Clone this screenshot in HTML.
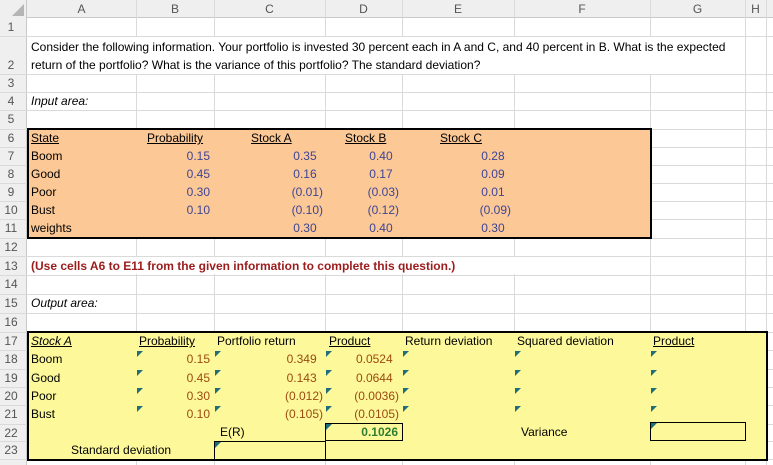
<!DOCTYPE html>
<html><head><meta charset="utf-8"><style>
*{margin:0;padding:0;box-sizing:border-box}
body{width:773px;height:465px;overflow:hidden;background:#fff;font-family:"Liberation Sans",sans-serif;font-size:12px;color:#000;position:relative}
.a{position:absolute}
.v{position:absolute;top:0;width:1px;height:465px;background:#dadada}
.h{position:absolute;left:0;width:773px;height:1px;background:#dadada}
.t{position:absolute;height:18px;line-height:18px;white-space:nowrap}
.r{text-align:right}
.u{text-decoration:underline}
.bl{color:#3d4596}
.br{color:#9c4a10}
.rn{position:absolute;left:0;width:22px;text-align:center;color:#555;font-size:12px;line-height:18px}
.tri{position:absolute;width:0;height:0;border-top:6px solid #1f6e7a;border-right:6px solid transparent}
</style></head><body>
<div class="a" style="left:0;top:0;width:773px;height:18px;background:#efefef;border-bottom:1px solid #c8c8c8"></div>
<div class="a" style="left:0;top:0;width:27px;height:465px;background:#efefef;border-right:1px solid #c8c8c8"></div>
<div class="a" style="left:12px;top:4px;width:0;height:0;border-left:12px solid transparent;border-bottom:12px solid #b5b5b5"></div>
<div class="v" style="left:136px"></div><div class="v" style="left:214px"></div><div class="v" style="left:325px"></div><div class="v" style="left:402px"></div><div class="v" style="left:514px"></div><div class="v" style="left:650px"></div><div class="v" style="left:745px"></div><div class="v" style="left:766px"></div>
<div class="h" style="top:36px"></div><div class="h" style="top:74px"></div><div class="h" style="top:92px"></div><div class="h" style="top:110px"></div><div class="h" style="top:129px"></div><div class="h" style="top:147px"></div><div class="h" style="top:165px"></div><div class="h" style="top:183px"></div><div class="h" style="top:201px"></div><div class="h" style="top:219px"></div><div class="h" style="top:238px"></div><div class="h" style="top:256px"></div><div class="h" style="top:275px"></div><div class="h" style="top:294px"></div><div class="h" style="top:313px"></div><div class="h" style="top:332px"></div><div class="h" style="top:350px"></div><div class="h" style="top:369px"></div><div class="h" style="top:387px"></div><div class="h" style="top:405px"></div><div class="h" style="top:424px"></div><div class="h" style="top:441px"></div><div class="h" style="top:459px"></div>
<div class="a" style="left:28px;top:37px;width:717px;height:37px;background:#fff"></div>
<div class="a" style="left:28px;top:257px;width:500px;height:17px;background:#fff"></div>
<div class="t" style="left:27px;width:109px;text-align:center;color:#555;top:0">A</div>
<div class="t" style="left:136px;width:78px;text-align:center;color:#555;top:0">B</div>
<div class="t" style="left:214px;width:111px;text-align:center;color:#555;top:0">C</div>
<div class="t" style="left:325px;width:77px;text-align:center;color:#555;top:0">D</div>
<div class="t" style="left:402px;width:112px;text-align:center;color:#555;top:0">E</div>
<div class="t" style="left:514px;width:136px;text-align:center;color:#555;top:0">F</div>
<div class="t" style="left:650px;width:95px;text-align:center;color:#555;top:0">G</div>
<div class="t" style="left:745px;width:21px;text-align:center;color:#555;top:0">H</div>
<div class="rn" style="top:18px">1</div><div class="rn" style="top:56px">2</div><div class="rn" style="top:74px">3</div><div class="rn" style="top:92px">4</div><div class="rn" style="top:110px">5</div><div class="rn" style="top:129px">6</div><div class="rn" style="top:147px">7</div><div class="rn" style="top:165px">8</div><div class="rn" style="top:183px">9</div><div class="rn" style="top:201px">10</div><div class="rn" style="top:219px">11</div><div class="rn" style="top:238px">12</div><div class="rn" style="top:257px">13</div><div class="rn" style="top:275px">14</div><div class="rn" style="top:294px">15</div><div class="rn" style="top:313px">16</div><div class="rn" style="top:332px">17</div><div class="rn" style="top:350px">18</div><div class="rn" style="top:369px">19</div><div class="rn" style="top:387px">20</div><div class="rn" style="top:405px">21</div><div class="rn" style="top:424px">22</div><div class="rn" style="top:441px">23</div>
<div class="t" style="left:31px;top:38px">Consider the following information. Your portfolio is invested 30 percent each in A and C, and 40 percent in B. What is the expected</div>
<div class="t" style="left:31px;top:56px">return of the portfolio? What is the variance of this portfolio? The standard deviation?</div>
<div class="t" style="left:31px;top:92px;font-style:italic">Input area:</div>
<div class="a" style="left:27px;top:128px;width:625px;height:111px;background:#fcc896;border:2px solid #000"></div>
<div class="t u" style="left:31px;top:129px">State</div>
<div class="t u" style="left:147px;top:129px">Probability</div>
<div class="t u" style="left:251px;top:129px">Stock A</div>
<div class="t u" style="left:345px;top:129px">Stock B</div>
<div class="t u" style="left:440px;top:129px">Stock C</div>
<div class="t" style="left:31px;top:147px">Boom</div><div class="t" style="left:31px;top:165px">Good</div><div class="t" style="left:31px;top:183px">Poor</div><div class="t" style="left:31px;top:201px">Bust</div><div class="t" style="left:31px;top:219px">weights</div>
<div class="t r bl" style="left:150px;width:60px;top:147px">0.15</div><div class="t r bl" style="left:150px;width:60px;top:165px">0.45</div><div class="t r bl" style="left:150px;width:60px;top:183px">0.30</div><div class="t r bl" style="left:150px;width:60px;top:201px">0.10</div>
<div class="t r bl" style="left:250px;width:70px;top:147px">0.35&nbsp;</div><div class="t r bl" style="left:250px;width:70px;top:165px">0.16&nbsp;</div><div class="t r bl" style="left:250px;width:73px;top:183px">(0.01)</div><div class="t r bl" style="left:250px;width:73px;top:201px">(0.10)</div><div class="t r bl" style="left:250px;width:70px;top:219px">0.30&nbsp;</div>
<div class="t r bl" style="left:330px;width:66px;top:147px">0.40&nbsp;</div><div class="t r bl" style="left:330px;width:66px;top:165px">0.17&nbsp;</div><div class="t r bl" style="left:330px;width:69px;top:183px">(0.03)</div><div class="t r bl" style="left:330px;width:69px;top:201px">(0.12)</div><div class="t r bl" style="left:330px;width:66px;top:219px">0.40&nbsp;</div>
<div class="t r bl" style="left:440px;width:68px;top:147px">0.28&nbsp;</div><div class="t r bl" style="left:440px;width:68px;top:165px">0.09&nbsp;</div><div class="t r bl" style="left:440px;width:68px;top:183px">0.01&nbsp;</div><div class="t r bl" style="left:440px;width:71px;top:201px">(0.09)</div><div class="t r bl" style="left:440px;width:68px;top:219px">0.30&nbsp;</div>
<div class="t" style="left:31px;top:257px;font-weight:bold;color:#9b1c1c">(Use cells A6 to E11 from the given information to complete this question.)</div>
<div class="t" style="left:31px;top:294px;font-style:italic">Output area:</div>
<div class="a" style="left:27px;top:331px;width:741px;height:130px;background:#fdf99a;border:2px solid #000"></div>
<div class="t u" style="left:31px;top:332px;font-style:italic">Stock A</div>
<div class="t u" style="left:139px;top:332px">Probability</div>
<div class="t" style="left:217px;top:332px">Portfolio return</div>
<div class="t u" style="left:329px;top:332px">Product</div>
<div class="t" style="left:405px;top:332px">Return deviation</div>
<div class="t" style="left:517px;top:332px">Squared deviation</div>
<div class="t u" style="left:653px;top:332px">Product</div>
<div class="t" style="left:31px;top:350px">Boom</div><div class="t" style="left:31px;top:369px">Good</div><div class="t" style="left:31px;top:387px">Poor</div><div class="t" style="left:31px;top:405px">Bust</div>
<div class="t r br" style="left:150px;width:60px;top:350px">0.15</div><div class="t r br" style="left:150px;width:60px;top:369px">0.45</div><div class="t r br" style="left:150px;width:60px;top:387px">0.30</div><div class="t r br" style="left:150px;width:60px;top:405px">0.10</div>
<div class="t r br" style="left:250px;width:70px;top:350px">0.349&nbsp;</div><div class="t r br" style="left:250px;width:70px;top:369px">0.143&nbsp;</div><div class="t r br" style="left:250px;width:73px;top:387px">(0.012)</div><div class="t r br" style="left:250px;width:73px;top:405px">(0.105)</div>
<div class="t r br" style="left:320px;width:76px;top:350px">0.0524&nbsp;</div><div class="t r br" style="left:320px;width:76px;top:369px">0.0644&nbsp;</div><div class="t r br" style="left:320px;width:79px;top:387px">(0.0036)</div><div class="t r br" style="left:320px;width:79px;top:405px">(0.0105)</div>
<div class="a" style="left:325px;top:423px;width:78px;height:18px;border:1px solid #000"></div>
<div class="t r" style="left:330px;width:68px;top:423px;font-weight:bold;color:#2e7d32">0.1026</div>
<div class="t" style="left:220px;top:423px">E(R)</div>
<div class="a" style="left:214px;top:441px;width:1px;height:19px;background:#000"></div>
<div class="a" style="left:214px;top:441px;width:111px;height:1px;background:#000"></div>
<div class="a" style="left:325px;top:441px;width:1px;height:19px;background:#000"></div>
<div class="t" style="left:71px;top:441px">Standard deviation</div>
<div class="t" style="left:521px;top:423px">Variance</div>
<div class="a" style="left:650px;top:422px;width:96px;height:19px;border:1px solid #000"></div>
<div class="tri" style="left:137px;top:351px"></div><div class="tri" style="left:137px;top:370px"></div><div class="tri" style="left:137px;top:388px"></div><div class="tri" style="left:137px;top:406px"></div>
<div class="tri" style="left:215px;top:351px"></div><div class="tri" style="left:215px;top:370px"></div><div class="tri" style="left:215px;top:388px"></div><div class="tri" style="left:215px;top:406px"></div><div class="tri" style="left:215px;top:442px"></div>
<div class="tri" style="left:326px;top:351px"></div><div class="tri" style="left:326px;top:370px"></div><div class="tri" style="left:326px;top:388px"></div><div class="tri" style="left:326px;top:406px"></div><div class="tri" style="left:326px;top:424px"></div>
<div class="tri" style="left:403px;top:351px"></div><div class="tri" style="left:403px;top:370px"></div><div class="tri" style="left:403px;top:388px"></div><div class="tri" style="left:403px;top:406px"></div>
<div class="tri" style="left:515px;top:351px"></div><div class="tri" style="left:515px;top:370px"></div><div class="tri" style="left:515px;top:388px"></div><div class="tri" style="left:515px;top:406px"></div>
<div class="tri" style="left:651px;top:351px"></div><div class="tri" style="left:651px;top:370px"></div><div class="tri" style="left:651px;top:388px"></div><div class="tri" style="left:651px;top:406px"></div><div class="tri" style="left:651px;top:423px"></div>
</body></html>
